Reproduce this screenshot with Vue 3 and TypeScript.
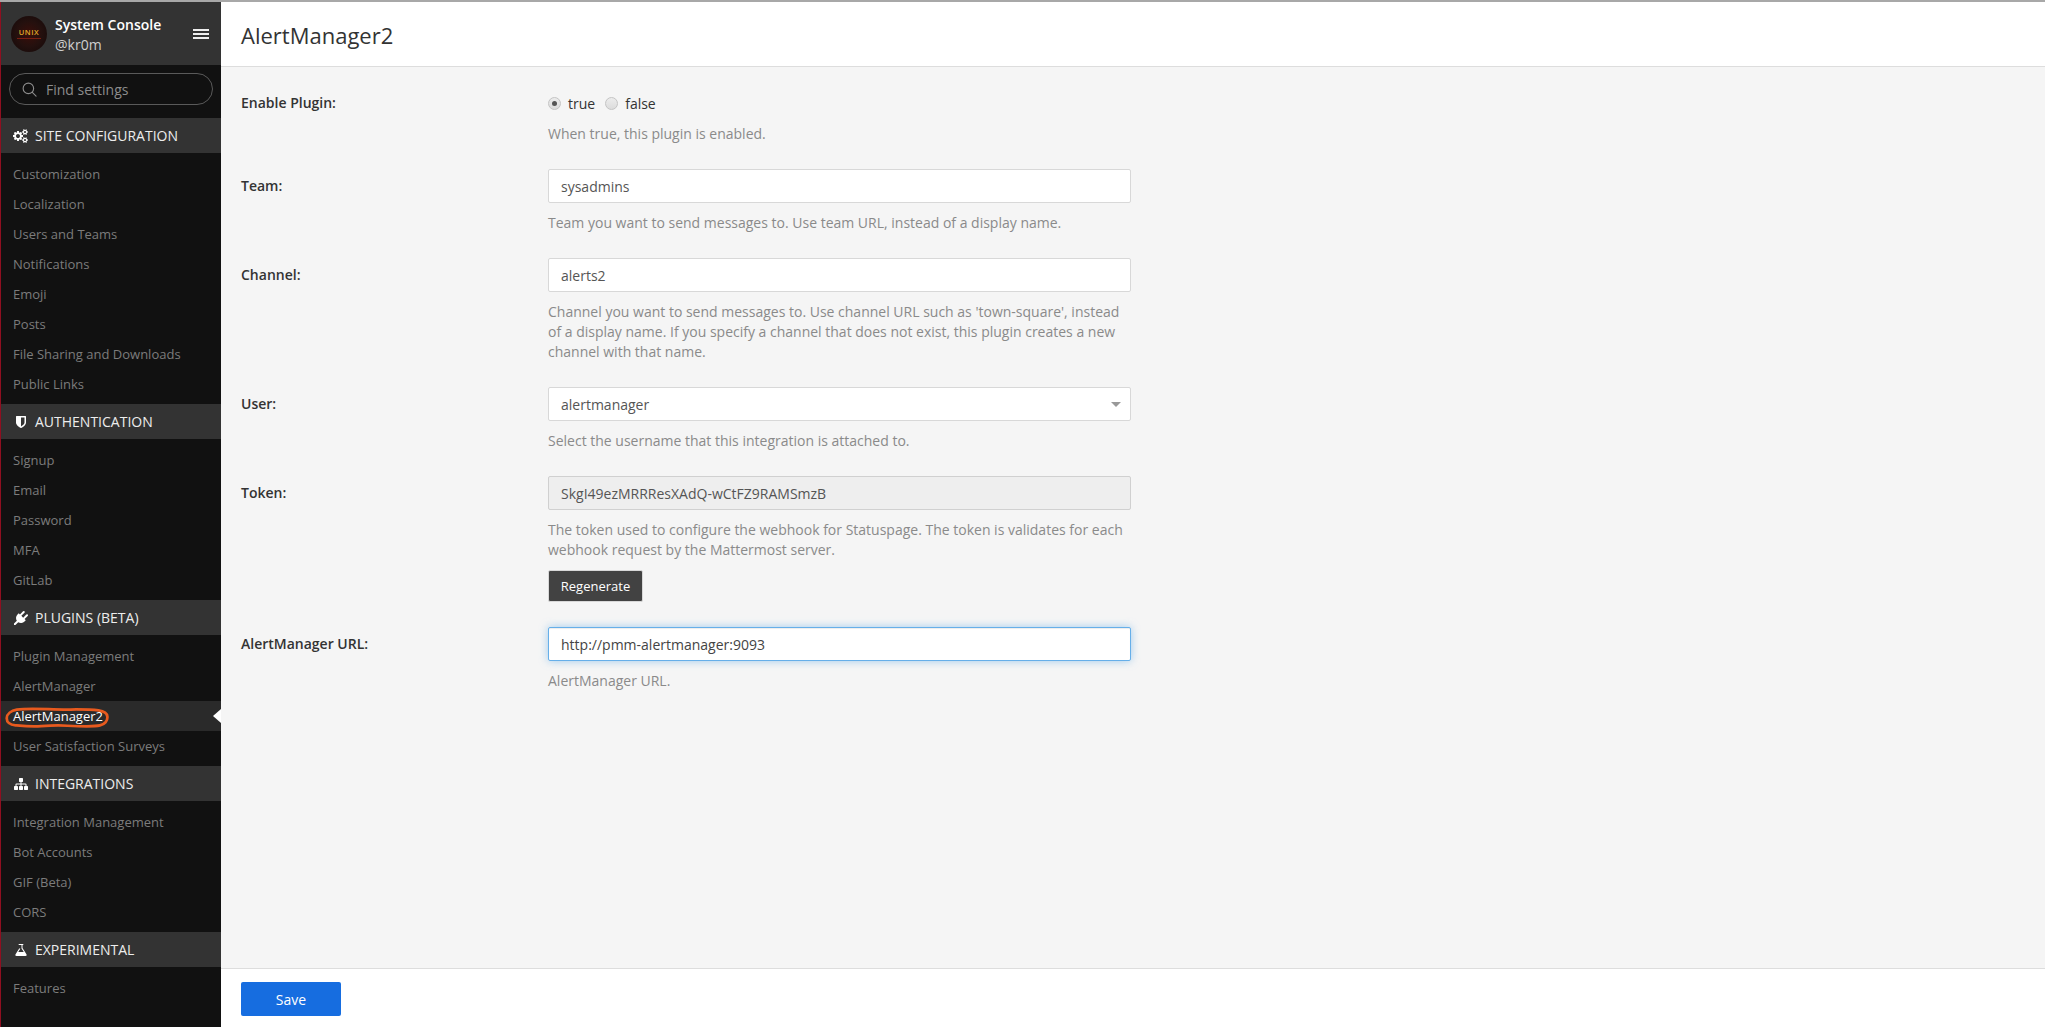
<script setup lang="ts">
interface Section { title: string; vb: string; icon: string; w: number; items: string[] }
const sections: Section[] = [
  { title: 'SITE CONFIGURATION', vb: '0 0 1920 1792', w: 16, icon: 'M832 896q0-106-75-181t-181-75-181 75-75 181 75 181 181 75 181-75 75-181zm768 512q0-52-38-90t-90-38-90 38-38 90q0 53 37.5 90.5t90.5 37.5 90.5-37.5 37.5-90.5zm0-1024q0-52-38-90t-90-38-90 38-38 90q0 53 37.5 90.5t90.5 37.5 90.5-37.5 37.5-90.5zm-384 421v185q0 10-7 19.5t-16 10.5l-155 24q-11 35-32 76 34 48 90 115 7 11 7 20 0 12-7 19-23 30-82.5 89.5t-78.5 59.5q-11 0-21-7l-115-90q-37 19-77 31-11 108-23 155-7 24-30 24h-186q-11 0-20-7.5t-10-17.5l-23-153q-34-10-75-31l-118 89q-7 7-20 7-11 0-21-8-144-133-144-160 0-9 7-19 10-14 41-53t47-61q-23-44-35-82l-152-24q-10-1-17-9.5t-7-19.5v-185q0-10 7-19.5t16-10.5l155-24q11-35 32-76-34-48-90-115-7-11-7-20 0-12 7-20 22-30 82-89t79-59q11 0 21 7l115 90q34-18 77-32 11-108 23-154 7-24 30-24h186q11 0 20 7.5t10 17.5l23 153q34 10 75 31l118-89q8-7 20-7 11 0 21 8 144 133 144 160 0 8-7 19-12 16-42 54t-45 60q23 48 34 82l152 23q10 2 17 10.5t7 19.5zm640 533v140q0 16-149 31-12 27-30 52 51 113 51 138 0 4-4 7-122 71-124 71-8 0-46-47t-52-68q-20 2-30 2t-30-2q-14 21-52 68t-46 47q-2 0-124-71-4-3-4-7 0-25 51-138-18-25-30-52-149-15-149-31v-140q0-16 149-31 13-29 30-52-51-113-51-138 0-4 4-7 4-2 35-20t59-34 30-16q8 0 46 46.5t52 67.5q20-2 30-2t30 2q51-71 92-112l6-2q4 0 124 70 4 3 4 7 0 25-51 138 17 23 30 52 149 15 149 31zm0-1024v140q0 16-149 31-12 27-30 52 51 113 51 138 0 4-4 7-122 71-124 71-8 0-46-47t-52-68q-20 2-30 2t-30-2q-14 21-52 68t-46 47q-2 0-124-71-4-3-4-7 0-25 51-138-18-25-30-52-149-15-149-31v-140q0-16 149-31 13-29 30-52-51-113-51-138 0-4 4-7 4-2 35-20t59-34 30-16q8 0 46 46.5t52 67.5q20-2 30-2t30 2q51-71 92-112l6-2q4 0 124 70 4 3 4 7 0 25-51 138 17 23 30 52 149 15 149 31z', items: ['Customization', 'Localization', 'Users and Teams', 'Notifications', 'Emoji', 'Posts', 'File Sharing and Downloads', 'Public Links'] },
  { title: 'AUTHENTICATION', vb: '0 0 1792 1792', w: 16, icon: 'M1344 960v-640h-448v1137q119-63 213-137 235-184 235-360zm192-768v768q0 86-33.5 170.5t-83 150-118 127.5-126.5 103-121 77.5-89.5 49.5-42.5 20q-12 6-26 6t-26-6q-16-7-42.5-20t-89.5-49.5-121-77.5-126.5-103-118-127.5-83-150-33.5-170.5v-768q0-26 19-45t45-19h1152q26 0 45 19t19 45z', items: ['Signup', 'Email', 'Password', 'MFA', 'GitLab'] },
  { title: 'PLUGINS (BETA)', vb: '0 0 1792 1792', w: 16, icon: 'M1755 453q37 38 37 90.5t-37 90.5l-401 400 150 150-160 160q-163 163-389.5 186.5t-411.5-100.5l-362 362h-181v-181l362-362q-124-185-100.5-411.5t186.5-389.5l160-160 150 150 400-401q38-37 91-37t90 37 37 90.5-37 90.5l-400 401 234 234 401-400q38-37 91-37t90 37z', items: ['Plugin Management', 'AlertManager', 'AlertManager2', 'User Satisfaction Surveys'] },
  { title: 'INTEGRATIONS', vb: '0 0 1792 1792', w: 16, icon: 'M1792 1248v320q0 40-28 68t-68 28h-320q-40 0-68-28t-28-68v-320q0-40 28-68t68-28h96v-192h-512v192h96q40 0 68 28t28 68v320q0 40-28 68t-68 28h-320q-40 0-68-28t-28-68v-320q0-40 28-68t68-28h96v-192h-512v192h96q40 0 68 28t28 68v320q0 40-28 68t-68 28h-320q-40 0-68-28t-28-68v-320q0-40 28-68t68-28h96v-192q0-52 38-90t90-38h512v-192h-96q-40 0-68-28t-28-68v-320q0-40 28-68t68-28h320q40 0 68 28t28 68v320q0 40-28 68t-68 28h-96v192h512q52 0 90 38t38 90v192h96q40 0 68 28t28 68z', items: ['Integration Management', 'Bot Accounts', 'GIF (Beta)', 'CORS'] },
  { title: 'EXPERIMENTAL', vb: '0 0 1792 1792', w: 16, icon: 'M1591 1448q56 89 21.5 152.5t-140.5 63.5h-1152q-106 0-140.5-63.5t21.5-152.5l503-793v-399h-64q-26 0-45-19t-19-45 19-45 45-19h512q26 0 45 19t19 45-19 45-45 19h-64v399zm-779-725l-272 429h712l-272-429-20-31v-436h-256v436z', items: ['Features'] },
]
const activeItem = 'AlertManager2'
</script>

<template>
  <div class="page">
    <div class="topline"></div>
    <div class="shell">
      <aside class="sidebar">
        <header class="brand">
          <div class="avatar"><span>UNIX</span><i></i></div>
          <div class="who">
            <div class="console">System Console</div>
            <div class="handle">@kr0m</div>
          </div>
          <div class="burger"><i></i><i></i><i></i></div>
        </header>
        <div class="searchwrap">
          <div class="search">
            <svg class="lens" viewBox="0 0 16 16" width="15" height="15" fill="none" stroke="#8c8c8c" stroke-width="1.2">
              <circle cx="6.8" cy="6.8" r="5.6" />
              <path d="M11 11l4 4" stroke-linecap="round" />
            </svg>
            <span>Find settings</span>
          </div>
        </div>
        <section v-for="s in sections" :key="s.title" class="section">
          <div class="sec-head">
            <span class="sec-icon">
              <svg :viewBox="s.vb" :width="s.w" height="14" fill="#fff" preserveAspectRatio="xMidYMid meet"><path :d="s.icon" /></svg>
            </span>
            <span>{{ s.title }}</span>
          </div>
          <ul class="items">
            <li v-for="it in s.items" :key="it" :class="{ active: it === activeItem }">
              {{ it }}
              <template v-if="it === activeItem">
                <svg class="scribble" viewBox="0 0 106 22" width="104" height="22" fill="none" stroke="#e85a1e" stroke-width="2.8" stroke-linecap="round" stroke-linejoin="round">
                  <path d="M12 2.500C6 3.500 2 7 1.800 11c-.2 4 3 7 9 7.500 9 .8 16 1.500 26 .8 10-.7 17-1 27-.4 10 .5 26 1.300 33-.3 5-1.200 8-5 7.500-9.100-.4-3.600-4-5.700-9-6.300-11-1.300-24-.8-36-.8C45 2.400 25 .6 12 2.500z" />
                </svg>
                <span class="pointer"></span>
              </template>
            </li>
          </ul>
        </section>
      </aside>

      <main class="main">
        <h1 class="title">AlertManager2</h1>
        <div class="form">
          <div class="row">
            <label class="lab">Enable Plugin:</label>
            <div class="ctl">
              <div class="radios">
                <span class="radio on"></span><span class="rtext">true</span>
                <span class="radio"></span><span class="rtext">false</span>
              </div>
              <p class="help">When true, this plugin is enabled.</p>
            </div>
          </div>
          <div class="row">
            <label class="lab">Team:</label>
            <div class="ctl">
              <input class="inp" value="sysadmins" />
              <p class="help">Team you want to send messages to. Use team URL, instead of a display name.</p>
            </div>
          </div>
          <div class="row">
            <label class="lab">Channel:</label>
            <div class="ctl">
              <input class="inp" value="alerts2" />
              <p class="help">Channel you want to send messages to. Use channel URL such as 'town-square', instead of a display name. If you specify a channel that does not exist, this plugin creates a new channel with that name.</p>
            </div>
          </div>
          <div class="row">
            <label class="lab">User:</label>
            <div class="ctl">
              <div class="selwrap">
                <select class="inp sel"><option>alertmanager</option></select>
                <span class="caret"></span>
              </div>
              <p class="help">Select the username that this integration is attached to.</p>
            </div>
          </div>
          <div class="row">
            <label class="lab">Token:</label>
            <div class="ctl">
              <input class="inp dis" value="SkgI49ezMRRResXAdQ-wCtFZ9RAMSmzB" disabled />
              <p class="help">The token used to configure the webhook for Statuspage. The token is validates for each webhook request by the Mattermost server.</p>
              <button class="regen" type="button">Regenerate</button>
            </div>
          </div>
          <div class="row">
            <label class="lab">AlertManager URL:</label>
            <div class="ctl">
              <input class="inp focus" value="http://pmm-alertmanager:9093" />
              <p class="help">AlertManager URL.</p>
            </div>
          </div>
        </div>
        <footer class="foot">
          <button class="save" type="button">Save</button>
        </footer>
      </main>
    </div>
  </div>
</template>

<style>
html, body { margin: 0; padding: 0; height: 100%; overflow: hidden; }
</style>

<style scoped>
.page { height: 1027px; display: flex; flex-direction: column; font-family: "Open Sans", sans-serif; font-size: 14px; color: #333; }
.topline { height: 2px; background: #a8a8a8; flex: none; }
.shell { flex: 1; display: flex; min-height: 0; }
.sidebar { width: 220px; flex: none; background: #111; border-left: 1px solid #8f0f20; overflow: hidden; }
.brand { height: 63px; background: #333; display: flex; align-items: center; padding-left: 10px; box-sizing: border-box; color: #fff; }
.avatar { width: 36px; height: 36px; border-radius: 50%; flex: none; background: radial-gradient(circle at 50% 50%, #3a0e0a 0%, #24100e 50%, #120808 100%); display: flex; flex-direction: column; align-items: center; justify-content: center; }
.avatar span { font-size: 7.500px; font-weight: 600; color: #e2aa2a; letter-spacing: .5px; line-height: 7px; }
.avatar i { display: block; width: 24px; height: 1px; margin-top: 2px; background: #7a1f12; }
.who { margin-left: 8px; flex: 1; padding-top: 2px; }
.console { font-weight: 600; font-size: 14px; line-height: 20px; color: #fff; }
.handle { font-size: 14px; line-height: 20px; color: #cfcfcf; }
.burger { display: flex; flex-direction: column; gap: 2px; margin-right: 12px; }
.burger i { display: block; width: 16px; height: 2px; background: #eee; }
.searchwrap { height: 53px; padding: 8px 8px 0 8px; box-sizing: border-box; }
.search { height: 32px; width: 204px; box-sizing: border-box; border: 1px solid #5a5a5a; border-radius: 16px; display: flex; align-items: center; padding-left: 12px; color: #8c8c8c; font-size: 14px; }
.lens { margin-right: 9px; }
.section { padding-bottom: 5px; }
.sec-head { height: 35px; background: #333; color: #ededed; display: flex; align-items: center; font-size: 14px; }
.sec-icon { width: 34px; padding-left: 12px; box-sizing: border-box; display: flex; align-items: center; flex: none; }
.items { list-style: none; margin: 0; padding: 6px 0 0; }
.items li { height: 30px; line-height: 30px; padding-left: 12px; font-size: 13px; color: #7c7c7c; position: relative; }
.items li.active { background: #2a2a2a; color: #fff; }
.scribble { position: absolute; left: 4px; top: 6px; }
.pointer { position: absolute; right: 0; top: 8px; border-style: solid; border-width: 7px 8px 7px 0; border-color: transparent #fff transparent transparent; }

.main { flex: 1; min-width: 0; display: flex; flex-direction: column; background: #f5f5f5; }
.title { margin: 0; height: 65px; flex: none; box-sizing: border-box; background: #fff; border-bottom: 1px solid #ddd; padding-left: 20px; font-size: 22px; font-weight: 400; line-height: 66px; color: #333; }
.form { flex: 1; padding: 19px 0 0 20px; min-height: 0; }
.row { display: flex; margin-bottom: 25px; }
.lab { width: 307px; flex: none; font-weight: 600; font-size: 14px; padding-top: 7px; line-height: 20px; color: #333; }
.ctl { width: 583px; flex: none; }
.radios { display: flex; align-items: center; height: 34px; }
.radio { width: 13px; height: 13px; box-sizing: border-box; border-radius: 50%; border: 1px solid #c4c4c4; background: linear-gradient(#ececec, #dcdcdc); position: relative; flex: none; }
.radio.on::after { content: ""; position: absolute; left: 3px; top: 3px; width: 5px; height: 5px; border-radius: 50%; background: #555; }
.rtext { margin: 0 10px 0 7px; font-size: 14px; color: #333; }
.help { margin: 4px 0 0; font-size: 14px; line-height: 20px; color: #8a8a8a; }
.inp + .help, .selwrap + .help { margin-top: 10px; }
.inp { display: block; width: 100%; height: 34px; box-sizing: border-box; border: 1px solid #d8d8d8; border-radius: 2px; background: #fff; padding: 0 12px; font: 14px "Open Sans", sans-serif; color: #555; outline: none; }
.selwrap { position: relative; }
.sel { appearance: none; -webkit-appearance: none; }
.caret { position: absolute; right: 10px; top: 15px; border-style: solid; border-width: 5px 5px 0; border-color: #999 transparent transparent; }
.dis { background: #eee; color: #555; border-color: #d0d0d0; }
.focus { border-color: #66afe9; box-shadow: inset 0 1px 1px rgba(0,0,0,.075), 0 0 8px rgba(102,175,233,.6); color: #444; }
.regen { display: block; margin-top: 10px; width: 95px; height: 32px; background: #424242; border: 1px solid #d8d8d8; border-radius: 2px; color: #fff; font: 13px "Open Sans", sans-serif; padding: 0; }
.foot { height: 59px; flex: none; box-sizing: border-box; background: #fff; border-top: 1px solid #ddd; padding: 13px 0 0 20px; }
.save { width: 100px; height: 34px; background: #166de0; border: none; border-radius: 2px; color: #fff; font: 14px "Open Sans", sans-serif; padding: 0; display: block; }
</style>
